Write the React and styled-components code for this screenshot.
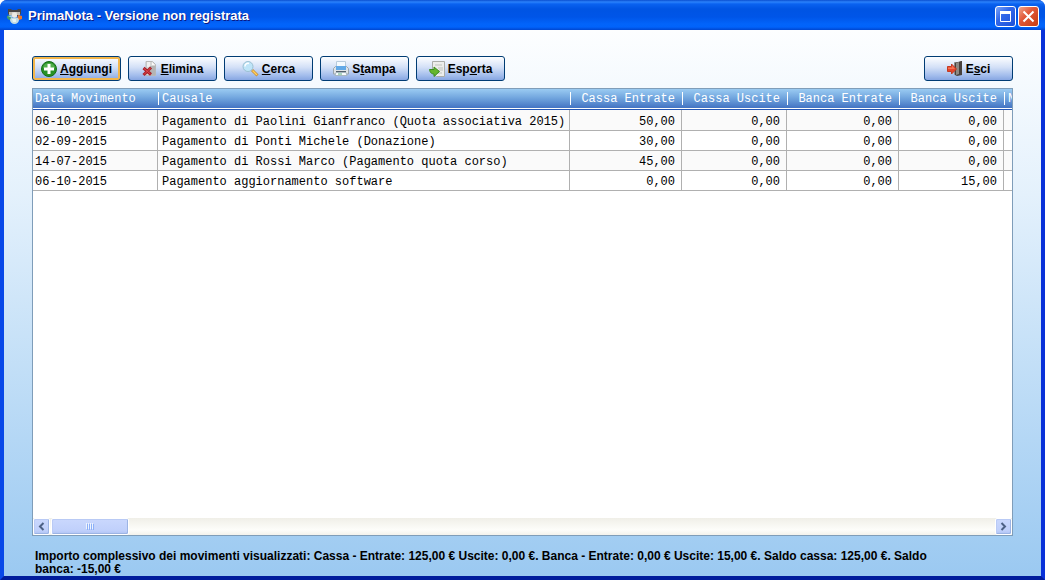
import React from "react";
import styled, { createGlobalStyle, css } from "styled-components";

const GlobalStyle = createGlobalStyle`
  * { box-sizing: border-box; }
  html, body { margin: 0; background: #fff; }
  button { font: inherit; color: inherit; margin: 0; }
`;

const Window = styled.main`
  display: flex;
  flex-direction: column;
  height: 100vh;
  overflow: hidden;
  border-radius: 7px 7px 0 0;
  background: #0846e0;
  font-family: "Liberation Sans", Arial, sans-serif;
  font-size: 12px;
  color: #000;
`;

const TitleBar = styled.header`
  display: flex;
  align-items: center;
  gap: 6px;
  flex: none;
  height: 30px;
  padding: 1px 6px 0 7px;
  background: linear-gradient(#0a4fd0 0, #2b82fb 2px, #0a62f0 4px, #0054e3 9px, #0055e8 17px, #0264fa 24px, #0163fb 27px, #0046d0 30px);
`;

const Title = styled.h1`
  flex: 1;
  margin: 0;
  font-size: 13px;
  line-height: 16px;
  font-weight: bold;
  color: #fff;
  text-shadow: 1px 1px 0 #0a1883;
`;

const Controls = styled.div`
  display: flex;
  gap: 2px;
  padding-top: 2px;
`;

const ControlButton = styled.button`
  display: flex;
  width: 21px;
  height: 21px;
  padding: 0;
  align-items: center;
  justify-content: center;
  border: 1px solid #fff;
  border-radius: 3px;
  background: ${(p) =>
    p.$close
      ? "linear-gradient(135deg, #f0a58c, #e2593a 40%, #c63c10)"
      : "linear-gradient(135deg, #7ba4f8, #3268ea 40%, #1c50d8)"};
`;

const Client = styled.div`
  display: flex;
  flex: 1;
  flex-direction: column;
  min-height: 0;
  padding: 26px 28px 0;
  border: solid;
  border-width: 0 4px 4px;
  border-color: #0848e8 #0831d9 #001c9c #0848e8;
  background: linear-gradient(#fdfeff, #e4f1fc 30%, #b4d7f5 75%, #9bc9f1);
`;

const Toolbar = styled.div`
  display: flex;
  gap: 7px;
  flex: none;
  margin-bottom: 7px;
`;

const ToolButton = styled.button`
  display: flex;
  align-items: center;
  justify-content: center;
  gap: 3px;
  width: 89px;
  height: 25px;
  padding: 0;
  border: 1px solid #003c74;
  border-radius: 3px;
  background: linear-gradient(#fdfeff, #d3e0f7 45%, #a3bdec 80%, #87a6e2);
  font-weight: bold;
  ${(p) => p.$active && css`box-shadow: inset 0 0 0 2px #f3b64b;`}
  ${(p) => p.$end && css`margin-left: auto;`}
`;

const Grid = styled.section`
  display: flex;
  flex: 1;
  flex-direction: column;
  min-height: 0;
  border: 1px solid #7f9db9;
  background: #fff;
`;

const GridView = styled.div`
  flex: 1;
  min-height: 0;
  overflow: hidden;
`;

const Table = styled.table`
  width: 100%;
  table-layout: fixed;
  border-collapse: separate;
  border-spacing: 0;
  font-family: "Liberation Mono", "Courier New", monospace;
`;

const Column = styled.col`
  width: ${(p) => p.$width};
`;

const HeadRow = styled.tr`
  background: linear-gradient(#9acbf2, #6fa3dd 45%, #3a69bd);
`;

const HeadCell = styled.th`
  position: relative;
  height: 21px;
  padding: 0 7px 0 ${(p) => (p.$first ? "2px" : "4px")};
  border-bottom: 1px solid #2456b4;
  box-shadow: inset 0 -1px 0 #fff;
  color: #fff;
  font-weight: normal;
  line-height: 16px;
  text-align: ${(p) => (p.$number ? "right" : "left")};
  white-space: nowrap;
  overflow: hidden;

  &:not(:first-child)::before {
    content: "";
    position: absolute;
    left: 0;
    top: 3px;
    width: 1px;
    height: 13px;
    background: #fff;
  }
`;

const Cell = styled.td`
  height: 20px;
  padding: 3px 6px 0 ${(p) => (p.$first ? "2px" : "4px")};
  border-right: 1px solid #b0b0b0;
  border-bottom: 1px solid #b0b0b0;
  line-height: 16px;
  text-align: ${(p) => (p.$number ? "right" : "left")};
  white-space: nowrap;
  overflow: hidden;

  &:last-child { border-right: 0; }
`;

const Row = styled.tr`
  &:nth-child(odd) { background: #fafafa; }
  &:first-child ${Cell} { height: 21px; }
`;

const ScrollBar = styled.div`
  display: flex;
  flex: none;
  gap: 1px;
  height: 17px;
  background: linear-gradient(#f0efe8, #fdfdfa 70%, #f3f2ec);
`;

const ScrollButton = styled.button`
  display: flex;
  align-items: center;
  justify-content: center;
  width: ${(p) => (p.$thumb ? "78px" : "17px")};
  height: 17px;
  padding: 0;
  border: 1px solid #fff;
  border-radius: 2px;
  background: linear-gradient(#cad8fd, #c0d0fb 75%, #b0c4f4);
  box-shadow: inset -1px -1px 0 #9cb4e4, inset 1px 1px 0 #b9caf5;
  ${(p) => p.$end && css`margin-left: auto;`}
`;

const Summary = styled.p`
  flex: none;
  margin: 14px 0 0;
  padding: 0 6% 0 3px;
  line-height: 13px;
  font-weight: bold;
`;

const AppIcon = () => (
  <svg width="15" height="16" viewBox="0 0 15 16" aria-hidden="true">
    <path d="M1 1h3l1 1h5l1-1h3v5l-3 2H4L1 6z" fill="#4a4644" />
    <path d="M2 4h3v3H2zM10 4h3v3h-3z" fill="#c3bdb2" />
    <path d="M0 8l4-1 1 5H2L0 10z" fill="#3f9a6a" />
    <path d="M1 8l4-1v3z" fill="#a9cbe8" />
    <path d="M11 7l4 1v3l-3 1h-2z" fill="#ea7a2a" />
    <path d="M5 4h5v5H5z" fill="#d5d2cb" />
    <circle cx="7.500" cy="7" r="2.500" fill="#eceae4" />
    <path d="M3 12c0-4 9-4 9 0 0 2-2 4-4.500 4S3 14 3 12z" fill="#c3dbe2" />
    <path d="M5 11h4v3H6z" fill="#e6f3f3" />
  </svg>
);

const AddIcon = () => (
  <svg width="16" height="16" viewBox="0 0 16 16" aria-hidden="true">
    <circle cx="8" cy="8" r="7.5" fill="#269126" stroke="#176c18" />
    <path d="M2 7a6 5 0 0 1 12 0c-4 2-8 2-12 0z" fill="#69bd60" opacity=".65" />
    <path d="M6.500 3h3v3.500H13v3H9.500V13h-3V9.500H3v-3h3.500z" fill="#fff" />
  </svg>
);

const DeleteIcon = () => (
  <svg width="16" height="16" viewBox="0 0 16 16" aria-hidden="true">
    <path d="M4 .5h6.500l3 3v11H4z" fill="#d6d6d6" stroke="#b8b8b8" />
    <path d="M8 5h5v9H8z" fill="#a5a5a5" opacity=".7" />
    <path d="M5 1h3v5H5z" fill="#efefef" />
    <path d="M10 1v3h3z" fill="#fafafa" />
    <path d="M1.500 7L9 13.500M9 6.500L1.500 14" stroke="#a92029" strokeWidth="3" />
    <path d="M2 7.500L8.500 13M8.500 7L2 13.500" stroke="#e04b50" strokeWidth="1" />
  </svg>
);

const SearchIcon = () => (
  <svg width="17" height="16" viewBox="0 0 17 16" aria-hidden="true">
    <path d="M10 9l5.500 5.500" stroke="#c98b31" strokeWidth="3" />
    <path d="M10.500 9.500l4.500 4.500" stroke="#ffd15f" strokeWidth="1.500" />
    <circle cx="6" cy="5.500" r="5" fill="#bfe5f8" stroke="#9bc0d2" />
    <path d="M3 5.500a3 3 0 0 1 4-3" stroke="#fff" strokeWidth="1.500" fill="none" />
  </svg>
);

const PrintIcon = () => (
  <svg width="16" height="16" viewBox="0 0 16 16" aria-hidden="true">
    <path d="M3.500 7V.5h9V7z" fill="#f4faff" stroke="#b8cbdc" />
    <path d="M.5 7.500l2-2h11l2 2v5.500H.5z" fill="#dfe3e6" stroke="#9aa5ad" />
    <path d="M3 5h10v4H3z" fill="#63a9e7" />
    <path d="M3 10h10v2H3z" fill="#53616d" />
    <path d="M3 11.500h10l1 3H2z" fill="#f8fbfd" stroke="#a9b8c0" />
    <path d="M5 13h4" stroke="#58ad7f" />
  </svg>
);

const ExportIcon = () => (
  <svg width="16" height="16" viewBox="0 0 16 16" aria-hidden="true">
    <path d="M3.500.5h12v15h-8l-4-4z" fill="#ecedeb" stroke="#aaada9" />
    <path d="M6 4h7M9 7h5M10 9h4M9 12h4" stroke="#bfc3bd" />
    <path d="M.5 8.500H5V6l5.500 4.500L5 15.500V13C3 13 1 12 .5 8.500z" fill="#65b52d" stroke="#3c8c21" />
  </svg>
);

const ExitIcon = () => (
  <svg width="16" height="16" viewBox="0 0 16 16" aria-hidden="true">
    <path d="M7.500 1.500h7v12h-7z" fill="#c4c6c8" stroke="#8a8a8a" />
    <path d="M8 2l6-2h1v14l-5 1-2-1z" fill="#48413d" />
    <path d="M9 2l3-1v12l-3 1z" fill="#8d8984" />
    <path d="M.5 5.500h4V3l5 5-5 5v-2.500h-4z" fill="#e6432b" stroke="#c23a22" />
    <path d="M1 6.500h4v-2L8 8H1z" fill="#ff8865" opacity=".7" />
  </svg>
);

const Chevron = ({ right }) => (
  <svg width="9" height="9" viewBox="0 0 9 9" aria-hidden="true">
    <path d={right ? "M2.500 1L6 4.500 2.500 8" : "M6.500 1L3 4.500 6.500 8"} fill="none" stroke="#4d6185" strokeWidth="2" />
  </svg>
);

const actions = [
  { icon: <AddIcon />, label: <span><u>A</u>ggiungi</span>, active: true },
  { icon: <DeleteIcon />, label: <span><u>E</u>limina</span> },
  { icon: <SearchIcon />, label: <span><u>C</u>erca</span> },
  { icon: <PrintIcon />, label: <span>S<u>t</u>ampa</span> },
  { icon: <ExportIcon />, label: <span>Esp<u>o</u>rta</span> },
];

const columns = [
  { title: "Data Movimento", width: "125px" },
  { title: "Causale", width: "412px" },
  { title: "Cassa Entrate", width: "112px", number: true },
  { title: "Cassa Uscite", width: "105px", number: true },
  { title: "Banca Entrate", width: "112px", number: true },
  { title: "Banca Uscite", width: "105px", number: true },
  { title: "N", width: "auto" },
];

const rows = [
  ["06-10-2015", "Pagamento di Paolini Gianfranco (Quota associativa 2015)", "50,00", "0,00", "0,00", "0,00", ""],
  ["02-09-2015", "Pagamento di Ponti Michele (Donazione)", "30,00", "0,00", "0,00", "0,00", ""],
  ["14-07-2015", "Pagamento di Rossi Marco (Pagamento quota corso)", "45,00", "0,00", "0,00", "0,00", ""],
  ["06-10-2015", "Pagamento aggiornamento software", "0,00", "0,00", "0,00", "15,00", ""],
];

export default function App() {
  return (
    <>
      <GlobalStyle />
      <Window>
        <TitleBar>
          <AppIcon />
          <Title>PrimaNota - Versione non registrata</Title>
          <Controls>
            <ControlButton aria-label="Ingrandisci">
              <svg width="13" height="13" viewBox="0 0 13 13">
                <path d="M1.500 2.500h10v9h-10z" fill="none" stroke="#fff" />
                <path d="M1 1h11v3H1z" fill="#fff" />
              </svg>
            </ControlButton>
            <ControlButton $close aria-label="Chiudi">
              <svg width="13" height="13" viewBox="0 0 13 13">
                <path d="M1.500 1.500l10 10M11.500 1.500l-10 10" stroke="#fff" strokeWidth="2" />
              </svg>
            </ControlButton>
          </Controls>
        </TitleBar>
        <Client>
          <Toolbar>
            {actions.map((a, i) => (
              <ToolButton key={i} $active={a.active}>{a.icon}{a.label}</ToolButton>
            ))}
            <ToolButton $end><ExitIcon /><span>E<u>s</u>ci</span></ToolButton>
          </Toolbar>
          <Grid>
            <GridView>
              <Table>
                <colgroup>
                  {columns.map((c) => <Column key={c.title} $width={c.width} />)}
                </colgroup>
                <thead>
                  <HeadRow>
                    {columns.map((c, i) => (
                      <HeadCell key={c.title} $first={i === 0} $number={c.number}>{c.title}</HeadCell>
                    ))}
                  </HeadRow>
                </thead>
                <tbody>
                  {rows.map((r, i) => (
                    <Row key={i}>
                      {r.map((v, j) => <Cell key={j} $first={j === 0} $number={columns[j].number}>{v}</Cell>)}
                    </Row>
                  ))}
                </tbody>
              </Table>
            </GridView>
            <ScrollBar>
              <ScrollButton aria-label="Scorri a sinistra"><Chevron /></ScrollButton>
              <ScrollButton $thumb aria-label="Cursore di scorrimento">
                <svg width="9" height="7" viewBox="0 0 9 7">
                  <path d="M.5 0v6M2.500 0v6M4.500 0v6M6.500 0v6" stroke="#eef4fe" />
                  <path d="M1.500 1v6M3.500 1v6M5.500 1v6M7.500 1v6" stroke="#8cb0f8" />
                </svg>
              </ScrollButton>
              <ScrollButton $end aria-label="Scorri a destra"><Chevron right /></ScrollButton>
            </ScrollBar>
          </Grid>
          <Summary>
            Importo complessivo dei movimenti visualizzati: Cassa - Entrate: 125,00 € Uscite: 0,00 €. Banca - Entrate: 0,00 € Uscite: 15,00 €. Saldo cassa: 125,00 €. Saldo banca: -15,00 €
          </Summary>
        </Client>
      </Window>
    </>
  );
}
